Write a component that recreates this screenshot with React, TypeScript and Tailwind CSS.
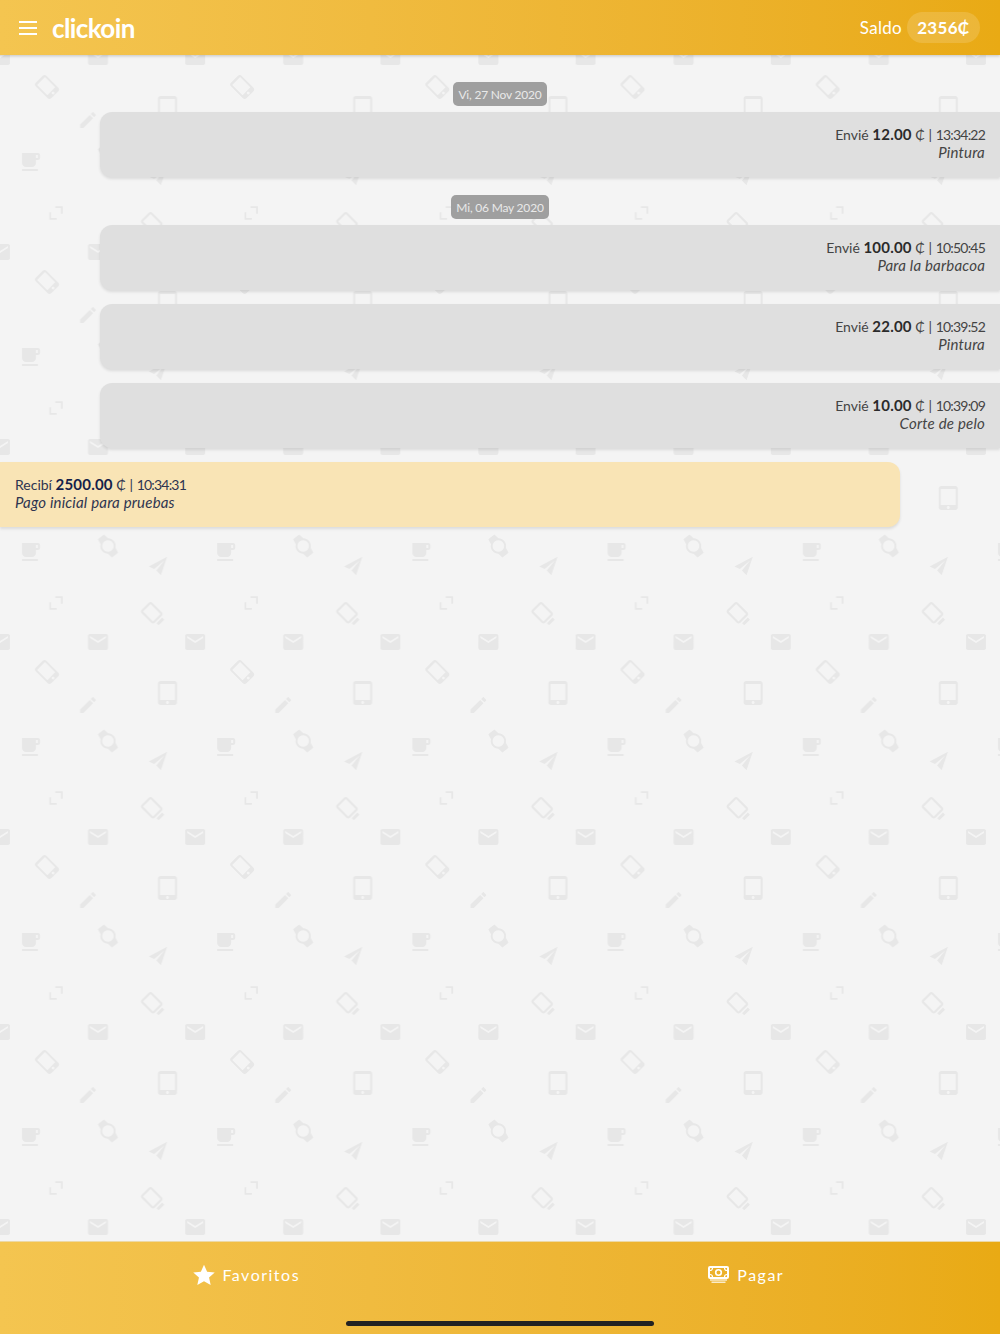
const txs = [
    { date: 'Vi, 27 Nov 2020', amount: '12.00', time: '13:34:22', note: 'Pintura' },
    { date: 'Mi, 06 May 2020', amount: '100.00', time: '10:50:45', note: 'Para la barbacoa' },
    { amount: '22.00', time: '10:39:52', note: 'Pintura' },
    { amount: '10.00', time: '10:39:09', note: 'Corte de pelo' },
];

// the wallpaper tile, one 24px glyph placed by its centre
function Glyph({ x, y, size = 24, rotate = 0, d }: { x: number; y: number; size?: number; rotate?: number; d: string }) {
    const s = size / 24;
    return <path d={d} transform={`translate(${x} ${y}) rotate(${rotate}) scale(${s}) translate(-12 -12)`} />;
}

const CUP = 'M20 3H4v10c0 2.21 1.79 4 4 4h6c2.21 0 4-1.79 4-4v-3h2c1.11 0 2-.9 2-2V5c0-1.11-.89-2-2-2zm0 5h-2V5h2v3zM4 19h16v2H4z';
const MAIL = 'M20 4H4c-1.1 0-1.99.9-1.99 2L2 18c0 1.1.9 2 2 2h16c1.1 0 2-.9 2-2V6c0-1.1-.9-2-2-2zm0 4l-8 5-8-5V6l8 5 8-5v2z';
const PENCIL = 'M3 17.25V21h3.75L17.81 9.94l-3.75-3.75L3 17.25zM20.71 7.04c.39-.39.39-1.02 0-1.41l-2.34-2.34c-.39-.39-1.02-.39-1.41 0l-1.83 1.83 3.75 3.75 1.83-1.83z';
const TABLET = 'M18.5 0h-14C3.12 0 2 1.12 2 2.5v19C2 22.88 3.12 24 4.5 24h14c1.38 0 2.5-1.12 2.5-2.5v-19C21 1.12 19.88 0 18.5 0zm-7 23c-.83 0-1.5-.67-1.5-1.5s.67-1.5 1.5-1.5 1.5.67 1.5 1.5-.67 1.5-1.5 1.5zm7.5-4H4V3h15v16z';
const WATCH = 'M20 12c0-2.54-1.19-4.81-3.04-6.27L16 0H8l-.95 5.73C5.19 7.19 4 9.45 4 12s1.19 4.81 3.05 6.27L8 24h8l.96-5.73C18.81 16.81 20 14.54 20 12zM6 12c0-3.31 2.69-6 6-6s6 2.69 6 6-2.69 6-6 6-6-2.69-6-6z';
const PLANE = 'M23 1L1 12.5l6.5 3.2L20 5 10 17.5 15.5 23z';
const EXPAND = 'M11 2h11v11h-2.6V4.6H11zM2 11h2.6v8.4H13V22H2z';
const PHONE = 'M17 1H7C5.6 1 4.5 2.1 4.5 3.5v17C4.5 21.9 5.6 23 7 23h10c1.4 0 2.5-1.1 2.5-2.5v-17C19.5 2.1 18.4 1 17 1zm-5 21c-.8 0-1.4-.6-1.4-1.4s.6-1.4 1.4-1.4 1.4.6 1.4 1.4-.6 1.4-1.4 1.4zm5.5-4h-11V3.5h11z';
const ROTATE = 'M17 1H7C5.6 1 4.5 2.1 4.5 3.5V17c0 1.4 1.1 2.5 2.5 2.5h10c1.4 0 2.5-1.1 2.5-2.5V3.5C19.5 2.1 18.4 1 17 1zm.3 16.2H6.7V3.3h10.6zM8 21h8v3H8z';
const STAR = 'M12 .8l3.4 7.6 8.3.9-6.2 5.5 1.8 8.2L12 18.800 4.700 23l1.800-8.200L.300 9.300l8.300-.9z';

function Wallpaper() {
    return (
        <svg className="absolute inset-0 w-full h-full" aria-hidden="true">
            <defs>
                <pattern id="tile" width="195.2" height="195" patternUnits="userSpaceOnUse">
                    <g fill="#e7e7e7">
                        <Glyph x={30} y={162} size={24} d={CUP} />
                        <Glyph x={108} y={156} size={23} rotate={-38} d={WATCH} />
                        <Glyph x={158} y={176} size={20} d={PLANE} />
                        <Glyph x={56} y={18} size={16} d={EXPAND} />
                        <Glyph x={153} y={29} size={24} rotate={-45} d={ROTATE} />
                        <Glyph x={0} y={57} size={24} d={MAIL} />
                        <Glyph x={195.2} y={57} size={24} d={MAIL} />
                        <Glyph x={98} y={57} size={24} d={MAIL} />
                        <Glyph x={47} y={87} size={24} rotate={-45} d={PHONE} />
                        <Glyph x={88} y={120} size={21} d={PENCIL} />
                        <Glyph x={168} y={108} size={24} d={TABLET} />
                    </g>
                </pattern>
            </defs>
            <rect width="100%" height="100%" fill="url(#tile)" />
        </svg>
    );
}

function DatePill({ label }: { label: string }) {
    return (
        <div className="self-center h-6 px-[5px] pt-px flex items-center rounded-[5px] bg-[#9f9f9f] text-[12px] text-[#e9e9e9] tracking-[-0.2px]">
            {label}
        </div>
    );
}

function Sent({ amount, time, note }: { amount: string; time: string; note: string }) {
    return (
        <div className="ml-[100px] h-[65px] pt-[13px] pr-[15px] rounded-l-xl bg-[#dfdfdf] shadow-[0_2px_3px_rgba(0,0,0,0.1)] text-right text-[15px] leading-[18px] text-[#444444]">
            <p className="h-[18px] text-[14px]">
                Envié <b className="text-[15px] font-bold tracking-[0.2px] text-[#2b2b2b]">{amount}</b> ₵ | <span className="tracking-[-0.8px]">{time}</span>
            </p>
            <p className="italic tracking-[0.2px]">{note}</p>
        </div>
    );
}

export default function App() {
    return (
        <div className="relative w-full h-[1334px] flex flex-col bg-[#f4f4f4] overflow-hidden font-['Lato','Noto_Sans',sans-serif]">
            <Wallpaper />

            {/* Header */}
            <header className="relative z-10 h-[55px] flex items-center pl-[19px] pr-5 bg-gradient-to-r from-[#f4c550] to-[#e9aa14] shadow-[0_1px_3px_rgba(0,0,0,0.2)] text-white">
                <svg width="18" height="14" viewBox="0 0 18 14" fill="none" stroke="white" strokeWidth="2">
                    <path d="M0 1h18M0 7h18M0 13h18" />
                </svg>
                <span className="ml-[15px] text-[26px] font-bold leading-none tracking-[-0.6px]">clickoin</span>
                <span className="ml-auto pt-px text-[17px] tracking-[0.3px]">Saldo</span>
                <span className="ml-[5px] w-[73px] h-[31px] flex items-center justify-center rounded-full bg-white/15 text-[17px] font-bold tracking-[0.3px]">2356₵</span>
            </header>

            {/* Movements */}
            <main className="relative flex-1 flex flex-col pt-[27px]">
                <DatePill label={txs[0].date!} />
                <div className="mt-1.5"><Sent {...txs[0]} /></div>
                <div className="mt-[18px] flex flex-col"><DatePill label={txs[1].date!} /></div>
                <div className="mt-[6px] flex flex-col gap-3.5">
                    <Sent {...txs[1]} />
                    <Sent {...txs[2]} />
                    <Sent {...txs[3]} />
                    <div className="mr-[100px] h-[65px] pt-[13px] pl-[15px] rounded-r-xl bg-[#f9e4b5] shadow-[0_2px_3px_rgba(0,0,0,0.1)] text-[15px] leading-[18px] text-[#2e3550]">
                        <p className="h-[18px] text-[14px]">
                            Recibí <b className="text-[15px] font-bold tracking-[0.2px] text-[#151f4a]">2500.00</b> ₵ | <span className="tracking-[-0.8px]">10:34:31</span>
                        </p>
                        <p className="italic tracking-[0.2px]">Pago inicial para pruebas</p>
                    </div>
                </div>
            </main>

            {/* Footer */}
            <footer className="relative z-10 h-[93px] flex pb-[27px] border-t border-[#ecd9a6] bg-gradient-to-r from-[#f4c550] to-[#e9aa14] text-white text-[16px] tracking-[1.5px]">
                <button className="flex-1 flex items-center justify-center gap-[7px] pr-[6px]">
                    <svg width="22" height="22" viewBox="0 0 24 24" fill="white"><path d={STAR} /></svg>
                    Favoritos
                </button>
                <button className="flex-1 flex items-center justify-center gap-2 pr-[7px]">
                    <svg width="21" height="18" viewBox="0 0 21 18" fill="none" stroke="white">
                        <rect x="1" y="1" width="19" height="11" rx="1" strokeWidth="2" />
                        <circle cx="10.5" cy="6.500" r="2.800" strokeWidth="1.600" />
                        <path d="M2 4.500c1.500 0 2.500-1 2.500-2.500M19 4.500c-1.500 0-2.500-1-2.500-2.500M2 8.500c1.500 0 2.500 1 2.500 2.500M19 8.500c-1.500 0-2.500 1-2.500 2.500" strokeWidth="1.200" />
                        <path d="M2 14h17M3.500 16.300h14" strokeWidth="1.500" opacity="0.75" />
                    </svg>
                    Pagar
                </button>
            </footer>

            <div className="absolute z-20 left-[346px] top-[1321px] w-[308px] h-[5px] rounded-full bg-[#222222]" />
        </div>
    );
}
